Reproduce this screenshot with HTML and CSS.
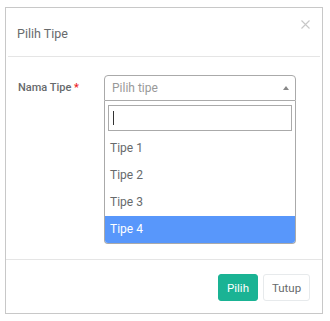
FILE: index.html
```html
<!DOCTYPE html>
<html lang="en">

<head>
    <meta charset="UTF-8">
    <meta name="viewport" content="width=device-width, initial-scale=1.0">
    <title>Pilih Tipe</title>
    <link rel="stylesheet" href="styles.css">
</head>

<body>
    <div class="modal">
        <div class="modal-header">
            <h4 class="modal-title">Pilih Tipe</h4>
            <button type="button" class="close">
                <svg width="9" height="9" viewBox="0 0 9 9">
                    <path d="M0.5 0.5 L8.5 8.5 M8.5 0.5 L0.5 8.5" stroke="#c8c8c8" stroke-width="1.1" fill="none" />
                </svg>
            </button>
        </div>
        <div class="modal-body">
            <div class="form-row">
                <label class="form-label">Nama Tipe <span class="required">*</span></label>
                <div class="select-box">
                    <div class="select-selection">
                        <span class="select-placeholder">Pilih tipe</span>
                        <span class="select-arrow"></span>
                    </div>
                    <div class="select-dropdown">
                        <div class="select-search">
                            <input type="text" class="search-field">
                            <span class="caret"></span>
                        </div>
                        <ul class="select-options">
                            <li>Tipe 1</li>
                            <li>Tipe 2</li>
                            <li>Tipe 3</li>
                            <li class="highlighted">Tipe 4</li>
                        </ul>
                    </div>
                </div>
            </div>
        </div>
        <div class="modal-footer">
            <button type="button" class="btn btn-primary">Pilih</button>
            <button type="button" class="btn btn-white">Tutup</button>
        </div>
    </div>
</body>

</html>
```

FILE: styles.css
```css
body {
    margin: 0;
    background-color: #ffffff;
    font-family: Roboto, "Open Sans", sans-serif;
    color: #676a6c;
}

.modal {
    margin: 7px 0 0 5px;
    width: 316px;
    height: 305px;
    border: 1px solid #c8c8c8;
    display: flex;
    flex-direction: column;
}

.modal-header {
    height: 48px;
    margin: 0 2px;
    border-bottom: 1px solid #e5e5e5;
    display: flex;
    justify-content: space-between;
    align-items: flex-start;
}

.modal-title {
    margin: 17px 0 0 9px;
    font-size: 12.5px;
    font-weight: 400;
    line-height: 18px;
    color: #676a6c;
}

.close {
    background: none;
    border: none;
    padding: 0;
    margin: 12px 10px 0 0;
    width: 9px;
    height: 9px;
    display: flex;
}

.modal-body {
    flex: 1;
    padding: 18px 12px 0 12px;
}

.form-row {
    display: flex;
    align-items: flex-start;
}

.form-label {
    width: 86px;
    font-size: 11px;
    font-weight: 500;
    line-height: 25px;
    color: #676a6c;
}

.required {
    color: #ed1c24;
}

.select-box {
    width: 192px;
}

.select-selection {
    height: 24px;
    border: 1px solid #aaaaaa;
    border-radius: 4px 4px 0 0;
    display: flex;
    align-items: center;
    justify-content: space-between;
    padding: 0 6px 0 7px;
}

.select-placeholder {
    font-size: 12px;
    color: #999999;
}

.select-arrow {
    width: 0;
    height: 0;
    border-left: 3px solid transparent;
    border-right: 3px solid transparent;
    border-bottom: 4px solid #888888;
}

.select-dropdown {
    border: 1px solid #aaaaaa;
    border-top: none;
    border-radius: 0 0 4px 4px;
    overflow: hidden;
}

.select-search {
    padding: 4px 3px;
    position: relative;
}

.search-field {
    display: block;
    box-sizing: border-box;
    width: 100%;
    height: 26px;
    border: 1px solid #aaaaaa;
    margin: 0;
    padding: 0;
    outline: none;
}

.caret {
    position: absolute;
    left: 8px;
    top: 10px;
    width: 1px;
    height: 14px;
    background-color: #333333;
}

.select-options {
    list-style: none;
    margin: 0;
    padding: 0;
}

.select-options li {
    height: 27px;
    line-height: 27px;
    padding: 0 5px;
    font-size: 12px;
    color: #676a6c;
}

.select-options li.highlighted {
    background-color: #5897fb;
    color: #ffffff;
}

.modal-footer {
    height: 53px;
    border-top: 1px solid #e5e5e5;
    display: flex;
    justify-content: flex-end;
    align-items: flex-start;
    gap: 5px;
    padding: 0 12px 0 0;
}

.btn {
    margin-top: 14px;
    height: 27px;
    border-radius: 3px;
    font-family: Roboto, "Open Sans", sans-serif;
    font-size: 11.5px;
    padding: 0 6px;
    cursor: pointer;
}

.btn-primary {
    background-color: #1ab394;
    border: 1px solid #1ab394;
    color: #ffffff;
    width: 40px;
}

.btn-white {
    background-color: #ffffff;
    border: 1px solid #e7eaec;
    color: #676a6c;
    width: 47px;
}
```
